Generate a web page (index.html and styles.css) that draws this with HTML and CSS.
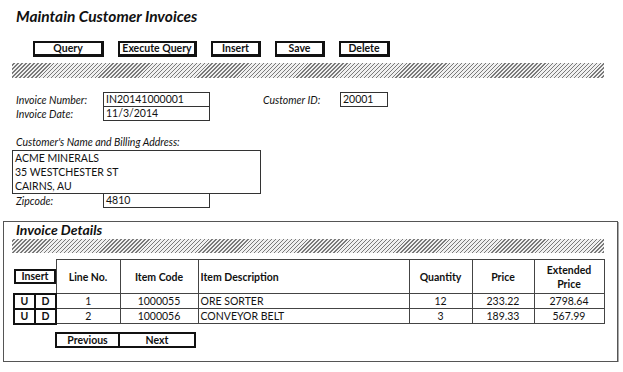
FILE: index.html
```html
<!DOCTYPE html>
<html>
<head>
<meta charset="utf-8">
<link rel="stylesheet" href="styles.css">
</head>
<body>
<div class="page">
  <h1 class="title">Maintain Customer Invoices</h1>
  <div class="toolbar">
    <button class="btn btn-query">Query</button>
    <button class="btn btn-exec">Execute Query</button>
    <button class="btn btn-insert">Insert</button>
    <button class="btn btn-save">Save</button>
    <button class="btn btn-delete">Delete</button>
  </div>
  <div class="hatch"></div>

  <div class="form">
    <div class="field-row">
      <span class="label">Invoice Number:</span>
      <span class="box box-mid">IN20141000001</span>
      <span class="label label-cust">Customer ID:</span>
      <span class="box box-small">20001</span>
    </div>
    <div class="field-row joined">
      <span class="label">Invoice Date:</span>
      <span class="box box-mid">11/3/2014</span>
    </div>
    <div class="addr-label">Customer's Name and Billing Address:</div>
    <div class="address">
      <div>ACME MINERALS</div>
      <div>35 WESTCHESTER ST</div>
      <div>CAIRNS, AU</div>
    </div>
    <div class="field-row joined">
      <span class="label">Zipcode:</span>
      <span class="box box-mid">4810</span>
    </div>
  </div>

  <section class="details">
    <h2 class="details-title">Invoice Details</h2>
    <div class="hatch hatch-inner"></div>
    <table class="grid">
      <colgroup>
        <col class="c-u"><col class="c-d"><col class="c-line"><col class="c-code"><col class="c-desc"><col class="c-qty"><col class="c-price"><col class="c-ext">
      </colgroup>
      <thead>
        <tr>
          <th class="ins-cell" colspan="2"><span class="mini-btn">Insert</span></th>
          <th>Line No.</th>
          <th>Item Code</th>
          <th class="left">Item Description</th>
          <th>Quantity</th>
          <th>Price</th>
          <th>Extended<br>Price</th>
        </tr>
      </thead>
      <tbody>
        <tr>
          <td class="ud">U</td><td class="ud">D</td>
          <td>1</td><td>1000055</td><td class="left">ORE SORTER</td><td>12</td><td>233.22</td><td>2798.64</td>
        </tr>
        <tr>
          <td class="ud">U</td><td class="ud">D</td>
          <td>2</td><td>1000056</td><td class="left">CONVEYOR BELT</td><td>3</td><td>189.33</td><td>567.99</td>
        </tr>
      </tbody>
    </table>
    <div class="pager">
      <span class="pg-btn pg-prev">Previous</span>
      <span class="pg-btn pg-next">Next</span>
    </div>
  </section>
</div>
</body>
</html>
```

FILE: styles.css
```css
* { box-sizing: border-box; }
body {
  margin: 0;
  background: #fff;
  color: #111;
  font-family: Lato, "Open Sans", sans-serif;
  font-size: 10.5px;
}
.page { padding-top: 7px; }
.title {
  margin: 0 0 0 16px;
  font-size: 15.5px;
  font-weight: 700;
  font-style: italic;
  line-height: 18px;
}
.toolbar {
  display: flex;
  gap: 14px;
  margin: 16px 0 0 33px;
}
.btn {
  height: 16px;
  padding: 0;
  border: 2px solid #111;
  border-right-width: 3px;
  border-bottom-width: 3px;
  background: #fff;
  color: #111;
  font-family: Lato, "Open Sans", sans-serif;
  font-size: 10.5px;
  font-weight: 700;
  line-height: 11px;
}
.btn-query { width: 71px; }
.btn-exec { width: 79px; }
.btn-insert { width: 50px; }
.btn-save { width: 50px; }
.btn-delete { width: 51px; }

.hatch {
  width: 592px;
  height: 15px;
  margin: 6px 0 0 12px;
  background: repeating-linear-gradient(135deg, #f0f0f0 0 1.4px, #7a7a7a 1.4px 2.4px, #f0f0f0 2.4px 2.8px);
}

.form { margin-top: 14px; padding-left: 12px; }
.field-row {
  display: flex;
  align-items: center;
  height: 15px;
}
.field-row.joined { margin-top: -1px; }
.label {
  width: 91px;
  padding-left: 4px;
  font-style: italic;
}
.label-cust { width: 77px; padding-left: 0; margin-left: 53px; }
.box {
  height: 15px;
  border: 1px solid #333;
  padding-left: 2px;
  line-height: 13px;
}
.box-mid { width: 107px; }
.box-small { width: 48px; }
.addr-label {
  margin-top: 14px;
  padding-left: 4px;
  height: 15px;
  line-height: 15px;
  font-style: italic;
}
.address {
  width: 249px;
  height: 44px;
  border: 1px solid #333;
  padding: 0 0 0 2px;
  line-height: 14px;
}

.details {
  margin: 13px 0 0 3px;
  width: 615px;
  height: 141px;
  border: 1px solid #555;
  box-shadow: 1px 1px 0 #aaa;
  padding-left: 8px;
}
.details-title {
  margin: 0 0 0 4px;
  font-size: 14px;
  font-weight: 700;
  font-style: italic;
  line-height: 16px;
}
.hatch-inner { margin: 1px 0 0 0; height: 14px; }

.grid {
  margin: 6px 0 0 1px;
  border-collapse: collapse;
  table-layout: fixed;
  width: 590px;
}
.c-u { width: 21px; }
.c-d { width: 21px; }
.c-line { width: 64px; }
.c-code { width: 78px; }
.c-desc { width: 211px; }
.c-qty { width: 63px; }
.c-price { width: 62px; }
.c-ext { width: 70px; }
.grid th, .grid td {
  border: 1px solid #444;
  padding: 0;
  text-align: center;
  font-size: 10.5px;
}
.grid th {
  height: 34px;
  font-weight: 700;
  line-height: 14px;
}
.grid td { height: 15px; line-height: 13px; }
.grid .left { text-align: left; padding-left: 2px; }
.grid th.ins-cell {
  border: none;
  border-right: 1px solid #444;
  padding: 0;
  text-align: left;
}
.mini-btn {
  display: block;
  width: 42px;
  height: 15px;
  border: 2px solid #111;
  font-weight: 700;
  line-height: 11px;
  text-align: center;
}
.grid td.ud {
  border: 2px solid #111;
  font-weight: 700;
}
.pager {
  display: flex;
  margin: 7px 0 0 43px;
}
.pg-btn {
  height: 16px;
  border: 2px solid #111;
  font-weight: 700;
  text-align: center;
  line-height: 12px;
}
.pg-prev { width: 65px; }
.pg-next { width: 78px; margin-left: -2px; }
```
